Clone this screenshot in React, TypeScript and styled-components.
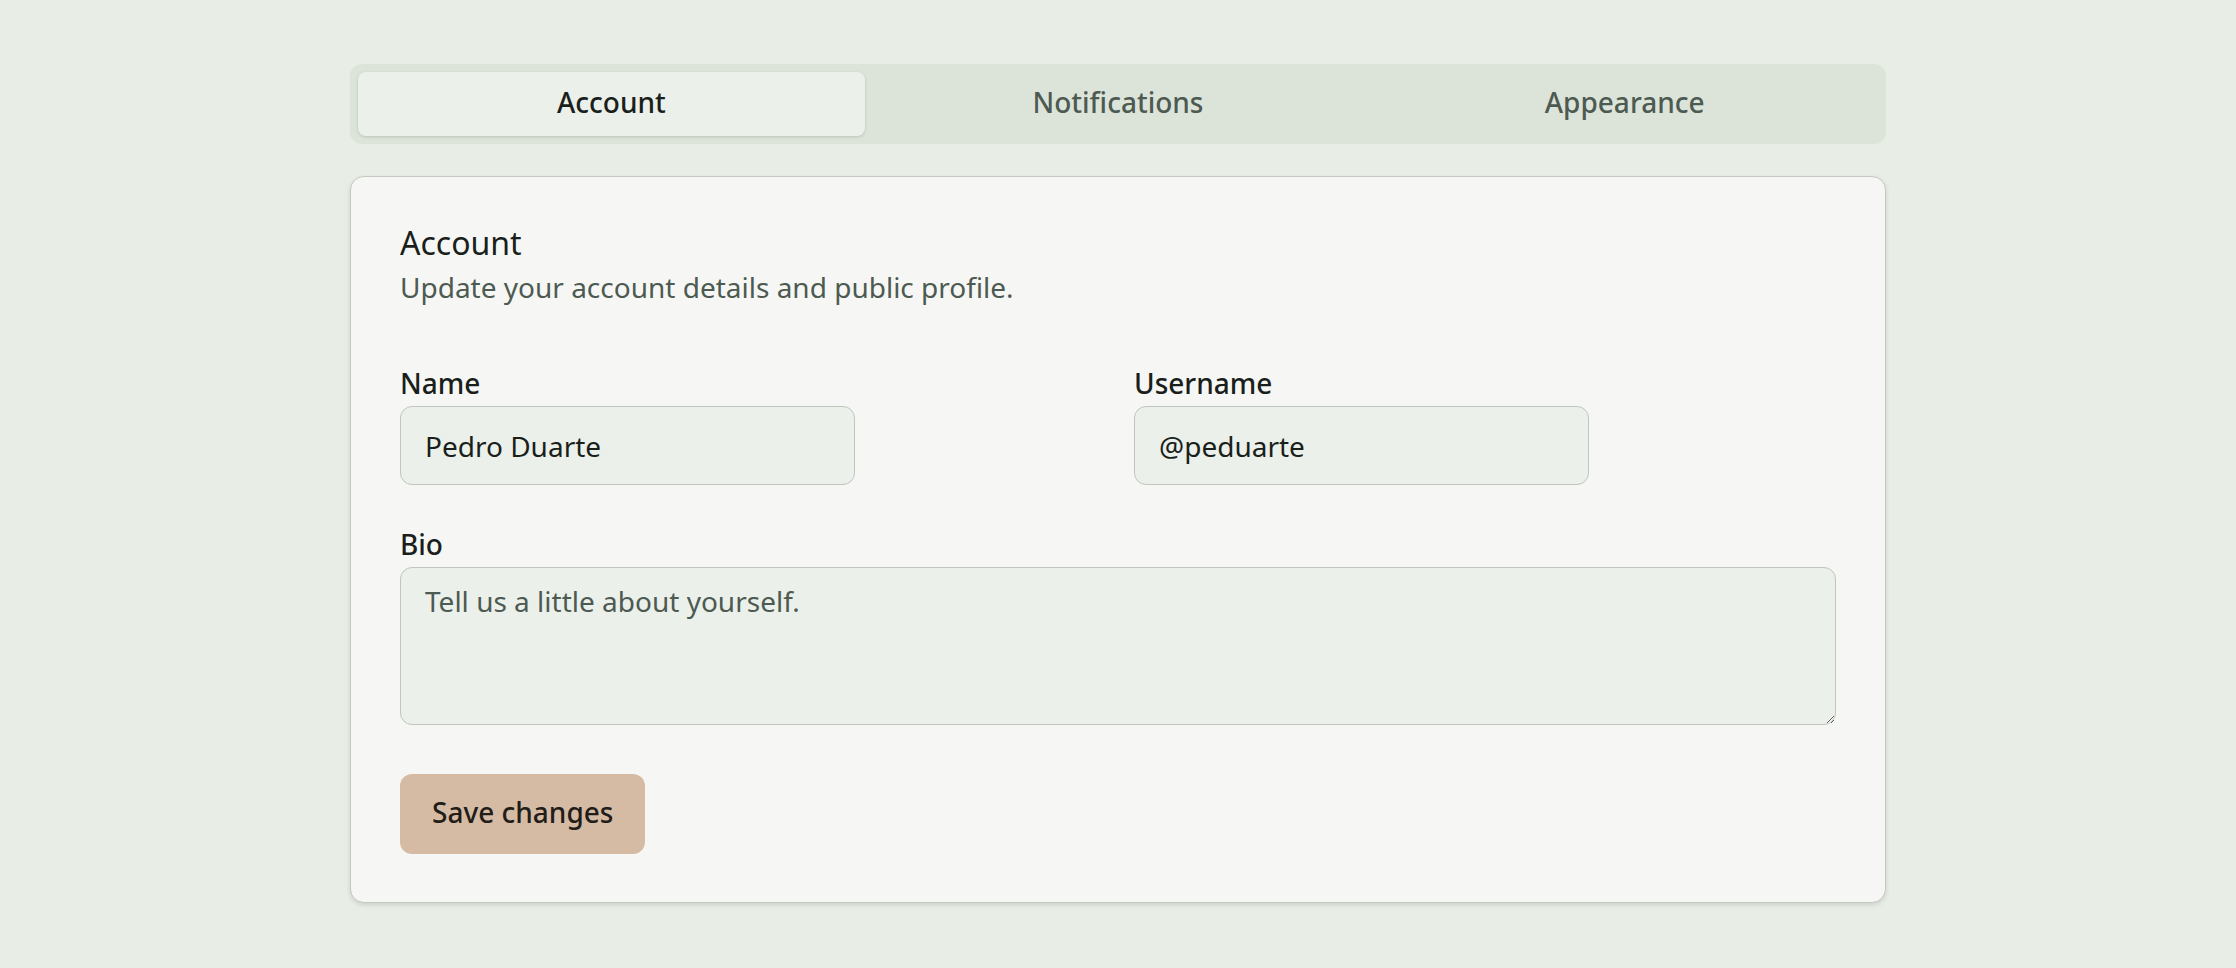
import React, { useState } from 'react';
import styled, { createGlobalStyle } from 'styled-components';

const GlobalStyle = createGlobalStyle`
  html, body {
    margin: 0;
    padding: 0;
    background: #e8ede6;
  }
  body {
    font-family: 'Noto Sans', 'Open Sans', sans-serif;
    color: #1a1f1b;
  }
  * {
    box-sizing: border-box;
  }
`;

const Page = styled.div`
  display: flex;
  justify-content: center;
  padding: 64px 0;
`;

const Container = styled.div`
  width: 1536px;
  display: flex;
  flex-direction: column;
  gap: 32px;
`;

const TabList = styled.div`
  display: grid;
  grid-template-columns: repeat(3, 1fr);
  padding: 8px;
  background: #dce4da;
  border-radius: 12px;
`;

const Tab = styled.button<{ $active?: boolean }>`
  height: 64px;
  border: none;
  border-radius: 8px;
  padding: 0 0 4px;
  font-family: inherit;
  font-size: 28px;
  font-weight: 500;
  cursor: pointer;
  color: ${(p) => (p.$active ? '#1a1f1b' : '#4d5a52')};
  background: ${(p) => (p.$active ? '#ebf0ea' : 'transparent')};
  box-shadow: ${(p) => (p.$active ? '0 1px 3px rgba(40, 50, 40, 0.18)' : 'none')};
`;

const Card = styled.form`
  background: #f6f7f4;
  border: 1px solid #c4c9c1;
  border-radius: 14px;
  padding: 48px 49px;
  box-shadow: 0 2px 4px rgba(40, 50, 40, 0.14);
`;

const Title = styled.h2`
  margin: 0;
  font-size: 32px;
  font-weight: 400;
  line-height: 1.1;
`;

const Subtitle = styled.p`
  margin: 6px 0 54px;
  font-size: 28px;
  line-height: 42px;
  color: #4d5a52;
`;

const FieldGrid = styled.div`
  display: grid;
  grid-template-columns: 1fr 1fr;
  column-gap: 32px;
  row-gap: 38px;
`;

const Field = styled.div<{ $wide?: boolean }>`
  display: flex;
  flex-direction: column;
  gap: 2px;
  grid-column: ${(p) => (p.$wide ? '1 / -1' : 'auto')};
`;

const Label = styled.label`
  font-size: 28px;
  font-weight: 500;
  line-height: 42px;
`;

const Input = styled.input`
  width: 455px;
  height: 79px;
  padding: 0 24px;
  border: 1.5px solid #bfc6bd;
  border-radius: 12px;
  background: #ebf0ea;
  font-family: inherit;
  font-size: 28px;
  color: #1a1f1b;
  outline: none;
`;

const Textarea = styled.textarea`
  width: 100%;
  height: 158px;
  padding: 12px 24px;
  border: 1.5px solid #bfc6bd;
  border-radius: 12px;
  background: #ebf0ea;
  font-family: inherit;
  font-size: 28px;
  line-height: 42px;
  color: #1a1f1b;
  resize: vertical;
  outline: none;

  &::placeholder {
    color: #4d5a52;
    opacity: 1;
  }
`;

const SaveButton = styled.button`
  margin-top: 49px;
  height: 80px;
  padding: 0 32px 4px;
  border: none;
  border-radius: 12px;
  background: #d6bba4;
  color: #221d19;
  font-family: inherit;
  font-size: 28px;
  font-weight: 500;
  cursor: pointer;
`;

const tabs = ['Account', 'Notifications', 'Appearance'];

const App: React.FC = () => {
  const [activeTab, setActiveTab] = useState('Account');
  const [form, setForm] = useState({ name: 'Pedro Duarte', username: '@peduarte', bio: '' });

  const handleChange = (event: React.ChangeEvent<HTMLInputElement | HTMLTextAreaElement>) => {
    const { name, value } = event.target;
    setForm((prev) => ({ ...prev, [name]: value }));
  };

  return (
    <Page>
      <GlobalStyle />
      <Container>
        <TabList>
          {tabs.map((tab) => (
            <Tab key={tab} type="button" $active={tab === activeTab} onClick={() => setActiveTab(tab)}>
              {tab}
            </Tab>
          ))}
        </TabList>

        <Card onSubmit={(e) => e.preventDefault()}>
          <Title>Account</Title>
          <Subtitle>Update your account details and public profile.</Subtitle>

          <FieldGrid>
            <Field>
              <Label htmlFor="name">Name</Label>
              <Input id="name" name="name" value={form.name} onChange={handleChange} />
            </Field>
            <Field>
              <Label htmlFor="username">Username</Label>
              <Input id="username" name="username" value={form.username} onChange={handleChange} />
            </Field>
            <Field $wide>
              <Label htmlFor="bio">Bio</Label>
              <Textarea
                id="bio"
                name="bio"
                placeholder="Tell us a little about yourself."
                value={form.bio}
                onChange={handleChange}
              />
            </Field>
          </FieldGrid>

          <SaveButton type="submit">Save changes</SaveButton>
        </Card>
      </Container>
    </Page>
  );
};

export default App;
